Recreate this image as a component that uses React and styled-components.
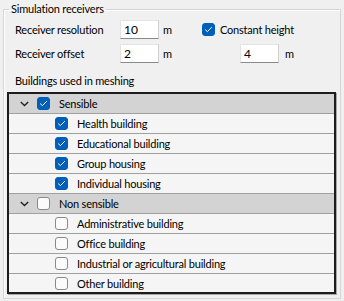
import React, { useState } from 'react';
import styled, { createGlobalStyle } from 'styled-components';

const GlobalStyle = createGlobalStyle`
  html, body {
    margin: 0;
    padding: 0;
    background: #f0f0f0;
  }
  body {
    font-family: Lato, 'Liberation Sans', sans-serif;
    font-size: 11px;
    letter-spacing: -0.2px;
    color: #000;
  }
`;

const groups = [
  {
    name: 'Sensible',
    items: [
      { name: 'Health building', checked: true },
      { name: 'Educational building', checked: true },
      { name: 'Group housing', checked: true },
      { name: 'Individual housing', checked: true },
    ],
  },
  {
    name: 'Non sensible',
    items: [
      { name: 'Administrative building', checked: false },
      { name: 'Office building', checked: false },
      { name: 'Industrial or agricultural building', checked: false },
      { name: 'Other building', checked: false },
    ],
  },
];

const Check = ({ checked }) => (
  <Box $checked={checked}>
    {checked && (
      <svg width='9' height='7' viewBox='0 0 9 7'>
        <path d='M1.2 3.6 L3.4 5.6 L7.8 1.2' fill='none' stroke='#fff' strokeWidth='1' />
      </svg>
    )}
  </Box>
);

const Chevron = () => (
  <svg width='9' height='6' viewBox='0 0 9 6'>
    <path d='M0.8 1 L4.5 4.6 L8.2 1' fill='none' stroke='#222' strokeWidth='1.4' />
  </svg>
);

const App = () => {
  const [resolution, setResolution] = useState('10');
  const [offset, setOffset] = useState('2');
  const [height, setHeight] = useState('4');

  return (
    <>
      <GlobalStyle />
      <Page>
        <Group>
          <Legend>Simulation receivers</Legend>
          <Form>
            <Label>Receiver resolution</Label>
            <Input value={resolution} onChange={(e) => setResolution(e.target.value)} />
            <Unit>m</Unit>
            <CheckLine>
              <Check checked />
              <span>Constant height</span>
            </CheckLine>

            <Label>Receiver offset</Label>
            <Input value={offset} onChange={(e) => setOffset(e.target.value)} />
            <Unit>m</Unit>
            <HeightLine>
              <Input value={height} onChange={(e) => setHeight(e.target.value)} />
              <Unit>m</Unit>
            </HeightLine>
          </Form>

          <Caption>Buildings used in meshing</Caption>
          <Tree>
            {groups.map((g) => (
              <React.Fragment key={g.name}>
                <Row $header>
                  <Toggle>
                    <Chevron />
                  </Toggle>
                  <Check checked={g.items.every((i) => i.checked)} />
                  <RowText>{g.name}</RowText>
                </Row>
                {g.items.map((item) => (
                  <Row key={item.name} $child>
                    <Check checked={item.checked} />
                    <RowText>{item.name}</RowText>
                  </Row>
                ))}
              </React.Fragment>
            ))}
          </Tree>
        </Group>
      </Page>
    </>
  );
};

const Page = styled.div`
  padding: 1px 3px 2px 3px;
`;

const Group = styled.fieldset`
  margin: 0;
  padding: 0 4px 4px 3px;
  border: 1px solid #d5d5d5;
  box-shadow: inset 1px 1px 0 #fff;
`;

const Legend = styled.legend`
  margin-left: 2px;
  padding: 0 2px;
  line-height: 16px;
`;

const Form = styled.div`
  display: grid;
  grid-template-columns: 105px 39px 43px 1fr;
  row-gap: 5px;
  align-items: center;
  margin-top: 3px;
  padding-left: 8px;
`;

const Label = styled.div`
  line-height: 16px;
`;

const Input = styled.input`
  box-sizing: border-box;
  width: 39px;
  height: 19px;
  margin: 0;
  padding: 0 3px;
  border: 1px solid #e3e3e3;
  border-bottom-color: #8a8a8a;
  border-right-color: #d0d0d0;
  background: #fff;
  font: inherit;
  font-size: 12px;
  color: #000;
  outline: none;
`;

const Unit = styled.span`
  padding-left: 4px;
  line-height: 16px;
`;

const CheckLine = styled.div`
  display: flex;
  align-items: center;
  gap: 5px;
`;

const HeightLine = styled.div`
  display: flex;
  align-items: center;
  padding-left: 38px;

  ${Unit} {
    padding-left: 6px;
  }
`;

const Caption = styled.div`
  margin-top: 10px;
  padding-left: 8px;
  line-height: 16px;
`;

const Tree = styled.div`
  box-sizing: border-box;
  height: 202px;
  margin-top: 3px;
  border: 2px solid #1c1c1c;
  box-shadow: 1px 1px 0 #a8a8a8;
  overflow: hidden;
  background: #f5f5f5;
`;

const Row = styled.div`
  box-sizing: border-box;
  display: flex;
  align-items: center;
  height: 20px;
  padding-left: ${(p) => (p.$child ? '46px' : '10px')};
  border-bottom: 1px solid #a0a0a0;
  background: ${(p) => (p.$header ? '#d3d3d3' : '#f5f5f5')};
`;

const Toggle = styled.span`
  display: flex;
  width: 16px;
  margin-right: 1px;
  padding-left: 1px;
`;

const Box = styled.span`
  box-sizing: border-box;
  display: inline-flex;
  align-items: center;
  justify-content: center;
  flex: none;
  width: 13px;
  height: 13px;
  border-radius: 3px;
  border: 1px solid ${(p) => (p.$checked ? '#005fb8' : '#8a8a8a')};
  background: ${(p) => (p.$checked ? '#005fb8' : '#fbfbfb')};
`;

const RowText = styled.span`
  margin-left: 9px;
  line-height: 16px;
  white-space: nowrap;
`;

export default App;
